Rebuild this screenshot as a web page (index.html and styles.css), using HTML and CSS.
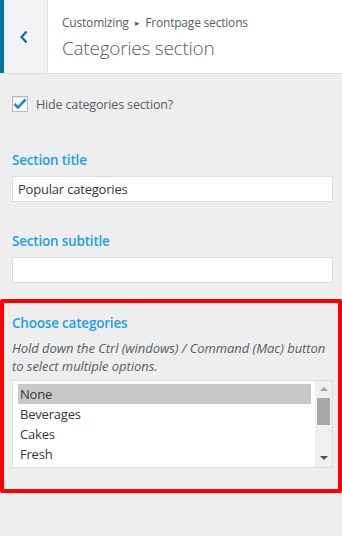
FILE: index.html
```html
<!DOCTYPE html>
<html>
  <head>
  <meta charset="UTF-8">
  <meta name="viewport" content="width=device-width,initial-scale=1.0">
  <link rel="stylesheet" href="styles.css">
  </head>
  <body>
    <div class="panel_head">
      <div class="back_btn">
        <svg width="10" height="14" viewBox="0 0 10 14"><path d="M7.5 1.5 L2.5 7 L7.5 12.5" fill="none" stroke="#0073aa" stroke-width="2.2"/></svg>
      </div>
      <div class="head_titles">
        <div class="crumbs">Customizing <span class="crumb_arrow">&#9656;</span> Frontpage sections</div>
        <div class="panel_title">Categories section</div>
      </div>
    </div>
    <div class="panel_body">
      <div class="control check_row">
        <span class="check_box">
          <svg width="14" height="12" viewBox="0 0 14 12"><path d="M1.5 6 L5 9.5 L12.5 1.5" fill="none" stroke="#1e8cbe" stroke-width="2.6"/></svg>
        </span>
        <span class="check_label">Hide categories section?</span>
      </div>
      <div class="control">
        <div class="c_title">Section title</div>
        <div class="text_input">Popular categories</div>
      </div>
      <div class="control">
        <div class="c_title sub">Section subtitle</div>
        <div class="text_input"></div>
      </div>
      <div class="control marked">
        <div class="c_title">Choose categories</div>
        <div class="c_desc">Hold down the Ctrl (windows) / Command (Mac) button to select multiple options.</div>
        <div class="list_box">
          <div class="list_opts">
            <div class="opt selected">None</div>
            <div class="opt">Beverages</div>
            <div class="opt">Cakes</div>
            <div class="opt">Fresh</div>
          </div>
          <div class="list_scroll">
            <span class="arr up"></span>
            <span class="thumb"></span>
            <span class="arr down"></span>
          </div>
        </div>
      </div>
    </div>
  </body>
</html>
```

FILE: styles.css
```css
*{
  margin:0;
  padding:0;
  box-sizing:border-box;
}
body{
  background-color:#eeeeee;
  font-family:"Open Sans","Noto Sans",sans-serif;
  color:#555d66;
  width:342px;
  height:536px;
  overflow:hidden;
}
.panel_head{
  display:flex;
  height:74px;
  background-color:#ffffff;
  border-bottom:1px solid #dddddd;
}
.back_btn{
  width:48px;
  display:flex;
  align-items:center;
  justify-content:center;
  background-color:#f3f3f5;
  border-left:4px solid #0073aa;
  border-right:1px solid #dddddd;
  padding-right:4px;
}
.head_titles{
  padding:14px 0 0 14px;
}
.crumbs{
  font-size:12px;
  line-height:18px;
  color:#555d66;
  letter-spacing:-0.2px;
}
.crumb_arrow{
  font-size:9px;
  margin:0 3px;
  position:relative;
  top:-1px;
}
.panel_title{
  font-size:19px;
  font-weight:300;
  line-height:26px;
  margin-top:2px;
  color:#555d66;
  letter-spacing:-0.25px;
}
.control{
  padding:0 9px 0 12px;
}
.check_row{
  display:flex;
  align-items:center;
  margin-top:22px;
  height:16px;
}
.check_box{
  width:16px;
  height:16px;
  border:1px solid #b4b9be;
  background-color:#ffffff;
  display:flex;
  align-items:center;
  justify-content:center;
  box-shadow:inset 0 1px 2px rgba(0,0,0,0.1);
}
.check_label{
  font-size:12.5px;
  margin-left:8px;
  letter-spacing:-0.15px;
}
.c_title{
  font-size:13.5px;
  font-weight:600;
  color:#1e9fe0;
  line-height:20px;
  letter-spacing:-0.2px;
}
.control .c_title{
  margin-top:38px;
}
.control .c_title.sub{
  margin-top:29px;
}
.text_input{
  margin-top:6px;
  height:26px;
  background-color:#ffffff;
  border:1px solid #dddddd;
  font-size:13px;
  line-height:24px;
  padding-left:5px;
  color:#32373c;
  letter-spacing:-0.2px;
}
.marked{
  margin-top:16px;
  border:4px solid #ff0000;
  border-radius:2px;
  padding:10px 5px 24px 8px;
  height:194px;
}
.control.marked .c_title{
  margin-top:0;
}
.c_desc{
  margin-top:6px;
  font-size:13px;
  font-style:italic;
  line-height:18px;
  color:#555d66;
  letter-spacing:-0.05px;
}
.list_box{
  margin-top:5px;
  display:flex;
  height:88px;
  background-color:#ffffff;
  border:1px solid #dddddd;
}
.list_opts{
  flex:1;
  padding:3px 4px 0 5px;
}
.opt{
  font-size:13px;
  line-height:20px;
  padding-left:2px;
  color:#32373c;
  letter-spacing:-0.2px;
}
.opt.selected{
  background-color:#c8c8c8;
}
.list_scroll{
  width:17px;
  background-color:#f0f0f0;
  display:flex;
  flex-direction:column;
  align-items:center;
}
.arr{
  width:0;
  height:0;
  border-left:4px solid transparent;
  border-right:4px solid transparent;
}
.arr.up{
  margin-top:6px;
  border-bottom:4px solid #a3a3a3;
}
.arr.down{
  margin-top:auto;
  margin-bottom:7px;
  border-top:4px solid #505050;
}
.thumb{
  margin-top:7px;
  width:13px;
  height:27px;
  background-color:#a8a8a8;
}
```
